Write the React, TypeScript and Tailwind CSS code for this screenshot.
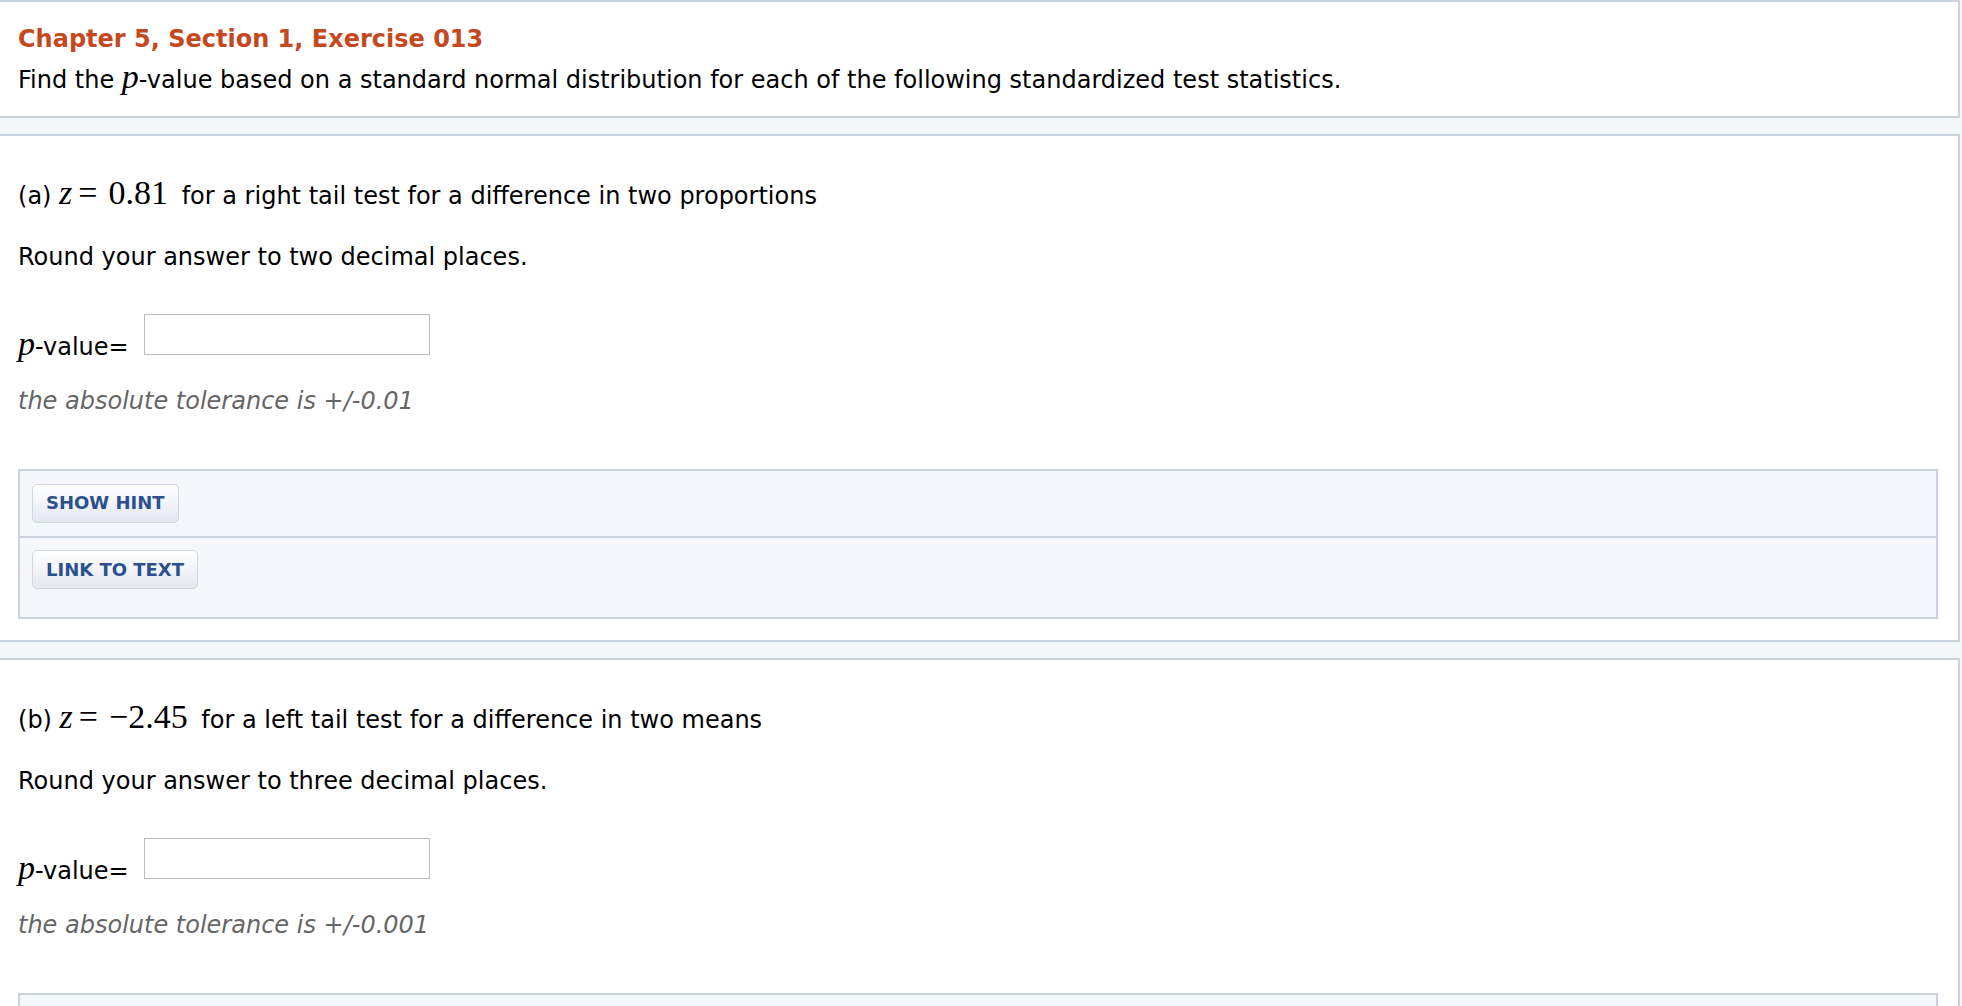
import { ReactNode } from "react";

const SANS = "font-[Verdana,'DejaVu_Sans',sans-serif]";
const SERIF = "font-['Liberation_Serif','Times_New_Roman',serif]";

// math glyphs: larger serif, line-height kept inside the 30px text strut
const M = ({ children, italic }: { children: ReactNode; italic?: boolean }) => (
  <span className={`${SERIF} text-[34px] leading-[20px] ${italic ? "italic" : ""}`}>{children}</span>
);

const Btn = ({ children }: { children: ReactNode }) => (
  <button
    type="button"
    className={`${SANS} h-[39px] px-[13px] rounded-[5px] border border-[#cfd7e2] bg-gradient-to-b from-white to-[#e4e8ef] text-[18px] font-bold text-[#2b5090] leading-none`}
  >
    {children}
  </button>
);

interface PartProps {
  tag: string;
  z: string;
  test: string;
  places: string;
  tol: string;
}

const Part = ({ tag, z, test, places, tol }: PartProps) => (
  <div className="bg-white border-2 border-l-0 border-[#cad3dd] pt-[45px] pb-[21px]">
    <div className="pl-[18px] h-[30px] leading-[30px] whitespace-nowrap">
      <span>({tag}) </span>
      <M italic>z</M>
      <span className={`${SERIF} text-[34px] leading-[20px] ml-[6px] mr-[11px]`}>=</span>
      <M>{z}</M>
      <span className="ml-[6px]"> {test}</span>
    </div>
    <div className="pl-[18px] leading-[30px] mt-[31px]">Round your answer to {places} decimal places.</div>
    <div className="pl-[18px] mt-[42px] flex items-end">
      <label className="h-[30px] leading-[30px] mb-[-7px] whitespace-nowrap">
        <M italic>p</M>-value=
      </label>
      <input type="text" className="ml-[15px] w-[286px] h-[41px] border border-[#bcbcbc] bg-white outline-none" />
    </div>
    <div className="pl-[18px] mt-[31px] leading-[30px] italic text-[#666666]">the absolute tolerance is {tol}</div>
    <div className="ml-[18px] mr-[20px] mt-[53px] border-2 border-[#cad3dd] bg-[#f4f7fb]">
      <div className="px-3 pt-3 pb-[13px]">
        <Btn>SHOW HINT</Btn>
      </div>
      <div className="border-t-2 border-[#cad3dd] px-3 pt-3 pb-[28px]">
        <Btn>LINK TO TEXT</Btn>
      </div>
    </div>
  </div>
);

export default function App() {
  return (
    <div className={`${SANS} min-h-screen bg-[#f4f7fa] text-[24px] text-black`}>
      <div className="mr-[2px] flex flex-col gap-4">
        {/* header card */}
        <div className="bg-white border-2 border-l-0 border-[#cad3dd] pl-[18px] pt-[22px] pb-[21px]">
          <h1 className="h-[30px] leading-[30px] font-bold text-[#c5491f]">Chapter 5, Section 1, Exercise 013</h1>
          <p className="h-[30px] leading-[30px] mt-[11px] whitespace-nowrap">
            Find the <M italic>p</M>-value based on a standard normal distribution for each of the following
            standardized test statistics.
          </p>
        </div>

        <Part
          tag="a"
          z="0.81"
          test="for a right tail test for a difference in two proportions"
          places="two"
          tol="+/-0.01"
        />
        <Part
          tag="b"
          z="−2.45"
          test="for a left tail test for a difference in two means"
          places="three"
          tol="+/-0.001"
        />
      </div>
    </div>
  );
}
